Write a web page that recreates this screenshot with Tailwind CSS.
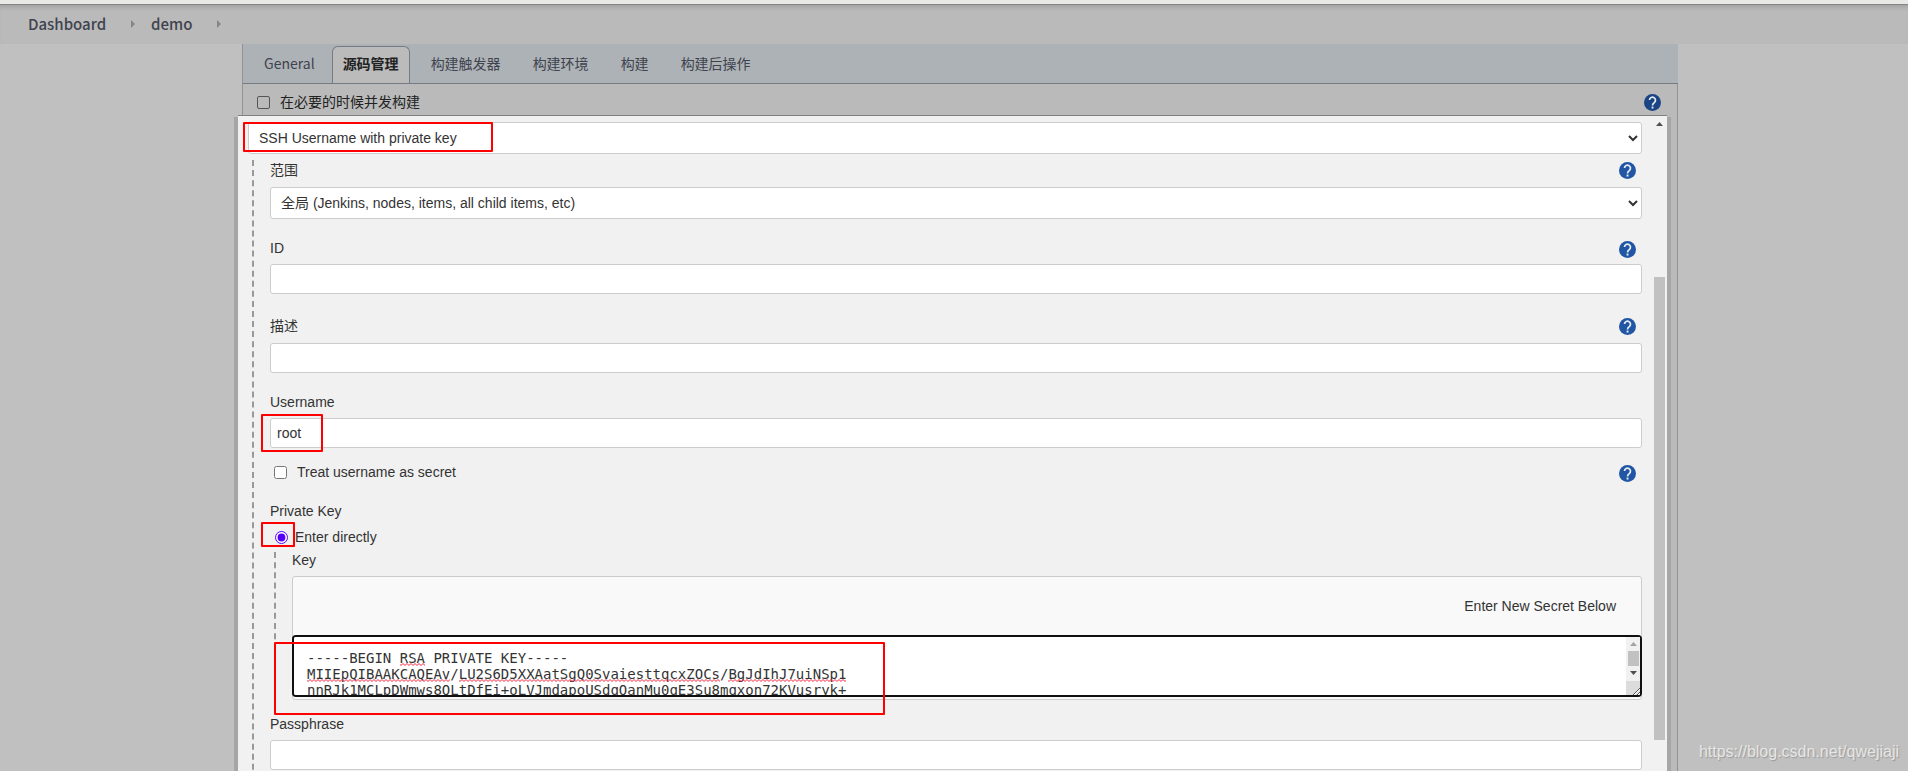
<!DOCTYPE html>
<html lang="zh-CN">
<head>
  <meta charset="UTF-8" />
  <meta name="viewport" content="width=device-width, initial-scale=1.0" />
  <title>demo Config [Jenkins]</title>
  <script src="https://cdn.jsdelivr.net/npm/@tailwindcss/browser@4"></script>
</head>
<body class="relative flex h-screen flex-col overflow-hidden bg-[#c0c0c0] font-['Liberation_Sans','Noto_Sans_CJK_SC',sans-serif] text-sm text-[#333]">

  <!-- shared icons -->
  <svg class="absolute size-0" aria-hidden="true">
    <symbol id="help" viewBox="0 0 24 24">
      <circle cx="12" cy="12" r="12" fill="currentColor" />
      <path d="M7.800 8.600a4.200 4.200 0 1 1 7 3.200C13 13.200 12 14 12 16.200" fill="none" stroke="#fff" stroke-opacity=".9" stroke-width="2.400" />
      <rect x="10.700" y="17.800" width="2.700" height="2.700" fill="#fff" fill-opacity=".9" />
    </symbol>
    <pattern id="squiggle" width="4" height="3" patternUnits="userSpaceOnUse">
      <path d="M-1 0L1 2L3 0L5 2" transform="translate(0 .5)" fill="none" stroke="#f0203c" />
    </pattern>
  </svg>

  <div class="h-[5px] shrink-0 border-b border-[#858585] bg-[#e9e9e7]"></div>
  <header class="flex h-[39px] shrink-0 items-center bg-[#bababa] pb-[2px] pl-7 font-['Noto_Sans_CJK_SC',sans-serif] text-[15px] font-medium text-[#40434e] shadow-[inset_0_5px_4px_-3px_#a0a0a0]">
    <a href="#">Dashboard</a>
    <svg class="mr-4 ml-[25px] h-2 w-1" viewBox="0 0 4 8"><path d="M0 0L4 4L0 8z" fill="#858585" /></svg>
    <a href="#">demo</a>
    <svg class="ml-[25px] h-2 w-1" viewBox="0 0 4 8"><path d="M0 0L4 4L0 8z" fill="#858585" /></svg>
  </header>

  <main class="mr-[230px] ml-[242px] flex-1 border-x border-[#929292] bg-[#bababa]">
    <nav class="-mr-px flex h-10 items-end border-b border-[#747b83] bg-[#adb2b6] pl-[11px] font-['Noto_Sans_CJK_SC',sans-serif] text-[#40434e]">
      <a href="#" class="flex h-[37px] items-center px-[10px] pb-1">General</a>
      <a href="#" class="mr-[11px] ml-[7px] flex h-[37px] items-center rounded-t-md border border-b-0 border-[#747b83] bg-[#bbb] px-[10px] pb-1 font-bold text-[#222]">源码管理</a>
      <a href="#" class="flex h-[37px] items-center px-[10px] pb-1">构建触发器</a>
      <a href="#" class="ml-3 flex h-[37px] items-center px-[10px] pb-1">构建环境</a>
      <a href="#" class="ml-3 flex h-[37px] items-center px-[10px] pb-1">构建</a>
      <a href="#" class="ml-3 flex h-[37px] items-center px-[10px] pb-1">构建后操作</a>
    </nav>
    <div class="flex h-9 items-center pr-4 pl-[14px]">
      <input type="checkbox" id="concurrent" class="size-[13px] appearance-none rounded-xs border border-[#555]" />
      <label for="concurrent" class="ml-[10px] text-[#222]">在必要的时候并发构建</label>
      <button aria-label="Help" class="ml-auto text-[#1a4483]"><svg class="size-[17px]"><use href="#help" /></svg></button>
    </div>
  </main>

  <!-- credentials dialog -->
  <div class="absolute top-[117px] right-[237px] bottom-0 left-[234px] bg-[#a6a6a6]"></div>
  <form class="absolute top-[115px] right-[241px] bottom-0 left-[238px] flex overflow-hidden border-t border-[#808080] bg-[#f1f1f1]">
    <div class="min-w-0 flex-1 pt-[6px] pr-[10px]">
      <div class="relative ml-[10px]">
        <select aria-label="类型" class="block h-8 w-full rounded-[3px] border border-[#ccc] bg-white px-[6px]">
          <option>SSH Username with private key</option>
        </select>
        <div class="absolute top-0 -left-[5px] h-[30px] w-[250px] rounded-[1px] border-2 border-[#f00]"></div>
      </div>

      <div class="mt-[6px] ml-[14px] border-l-2 border-dashed border-[#999] pb-10 pl-4">
        <div class="mb-[7px] flex h-5 items-center justify-between pr-[6px]">
          <label for="scope">范围</label>
          <button type="button" aria-label="Help" class="text-[#2156a5]"><svg class="size-[17px]"><use href="#help" /></svg></button>
        </div>
        <select id="scope" class="block h-8 w-full rounded-[3px] border border-[#ccc] bg-white px-[6px]">
          <option>全局 (Jenkins, nodes, items, all child items, etc)</option>
        </select>

        <div class="mt-5 mb-[5px] flex h-5 items-center justify-between pr-[6px]">
          <label for="id" class="self-start leading-[18px]">ID</label>
          <button type="button" aria-label="Help" class="text-[#2156a5]"><svg class="size-[17px]"><use href="#help" /></svg></button>
        </div>
        <input type="text" id="id" class="block h-[30px] w-full rounded-[3px] border border-[#ccc] bg-white px-[6px]" />

        <div class="mt-5 mb-[5px] flex h-6 items-center justify-between pr-[6px]">
          <label for="description">描述</label>
          <button type="button" aria-label="Help" class="text-[#2156a5]"><svg class="size-[17px]"><use href="#help" /></svg></button>
        </div>
        <input type="text" id="description" class="block h-[30px] w-full rounded-[3px] border border-[#ccc] bg-white px-[6px]" />

        <div class="mt-5 mb-[5px] flex h-5">
          <label for="username" class="leading-[18px]">Username</label>
        </div>
        <div class="relative">
          <input type="text" id="username" value="root" class="block h-[30px] w-full rounded-[3px] border border-[#ccc] bg-white px-[6px]" />
          <div class="absolute -top-1 -left-[9px] h-[38px] w-[62px] rounded-[1px] border-2 border-[#f00]"></div>
        </div>

        <div class="mt-[14px] flex h-5 items-center pr-[6px] pl-1">
          <input type="checkbox" id="secret" class="size-[13px]" />
          <label for="secret" class="ml-[10px]">Treat username as secret</label>
          <button type="button" aria-label="Help" class="ml-auto self-end text-[#2156a5]"><svg class="size-[17px]"><use href="#help" /></svg></button>
        </div>

        <div class="mt-5 mb-[5px] h-5 leading-[18px]">Private Key</div>
        <div class="relative flex h-5 items-center pl-[5px]">
          <input type="radio" id="direct" name="source" checked class="size-[13px] accent-[#5500ff]" />
          <label for="direct" class="ml-[7px] leading-[22px]">Enter directly</label>
          <div class="absolute -top-[5px] -left-[9px] h-[25px] w-[34px] rounded-[1px] border-2 border-[#f00]"></div>
        </div>

        <div class="mt-[5px] ml-1 border-l-2 border-dashed border-[#999] pl-4">
          <label for="key" class="mb-[6px] block h-[18px] leading-4">Key</label>
          <div class="rounded-[3px] border border-[#ccc] bg-[#f9f9f9]">
            <div class="flex h-[58px] items-center justify-end pr-[25px]">Enter New Secret Below</div>
            <div class="relative -mx-px mb-[2px]">
              <textarea id="key" spellcheck="false" class="block h-[62px] w-full resize overflow-y-scroll rounded-sm border-2 border-[#101010] bg-white p-[13px] font-['DejaVu_Sans_Mono',monospace] leading-4">-----BEGIN RSA PRIVATE KEY-----
MIIEpQIBAAKCAQEAv/LU2S6D5XXAatSgQ0SvaiesttqcxZOCs/BgJdIhJ7uiNSp1
nnRJk1MCLpDWmws8QLtDfEi+oLVJmdapoUSdqQanMu0qE3Su8mqxon72KVusryk+</textarea>
              <!-- spelling marks under the first two lines -->
              <div class="pointer-events-none absolute top-[15px] left-[15px] font-['DejaVu_Sans_Mono',monospace]" aria-hidden="true">
                <div class="flex h-4 items-end"><svg class="ml-[11ch] h-[3px] w-[3ch]"><rect width="100%" height="3" fill="url(#squiggle)" /></svg></div>
                <div class="flex h-4 items-end gap-[1ch]">
                  <svg class="h-[3px] w-[17ch]"><rect width="100%" height="3" fill="url(#squiggle)" /></svg>
                  <svg class="h-[3px] w-[31ch]"><rect width="100%" height="3" fill="url(#squiggle)" /></svg>
                  <svg class="h-[3px] w-[14ch]"><rect width="100%" height="3" fill="url(#squiggle)" /></svg>
                </div>
              </div>
              <!-- textarea scrollbar and resize grip -->
              <svg class="pointer-events-none absolute top-[2px] right-[2px] h-[58px] w-[14px]" viewBox="0 0 14 58" aria-hidden="true">
                <rect width="14" height="44" fill="#f1f1f1" />
                <path d="M7.500 5L11 9H4z" fill="#a3a3a3" />
                <rect x="2" y="14" width="11" height="15" fill="#c1c1c1" />
                <path d="M7.500 38L4 34H11z" fill="#505050" />
                <rect y="44" width="14" height="14" fill="#dcdcdc" />
                <path d="M7 58L14 51M11 58L14 55" stroke="#555" />
                <path d="M8 58L14 52M12 58L14 56" stroke="#fff" />
              </svg>
              <div class="pointer-events-none absolute top-[7px] -left-[18px] h-[73px] w-[611px] rounded-[1px] border-2 border-[#f00]"></div>
            </div>
          </div>
        </div>

        <div class="mt-[15px] mb-[5px] flex h-5">
          <label for="passphrase" class="leading-[18px]">Passphrase</label>
        </div>
        <input type="password" id="passphrase" class="block h-[30px] w-full rounded-[3px] border border-[#ccc] bg-white px-[6px]" />
      </div>
    </div>

    <!-- dialog scrollbar -->
    <div class="flex w-[15px] shrink-0 flex-col items-center pt-[6px]">
      <svg class="h-1 w-[7px]" viewBox="0 0 7 4"><path d="M3.500 0L7 4H0z" fill="#505050" /></svg>
      <div class="mt-[151px] h-[463px] w-[11px] shrink-0 bg-[#c1c1c1]"></div>
    </div>
  </form>

  <div class="absolute right-[9px] bottom-[9px] text-base leading-5 text-[#e6e6e6] [text-shadow:1px_1px_1px_#999]">https://blog.csdn.net/qwejiaji</div>
</body>
</html>
